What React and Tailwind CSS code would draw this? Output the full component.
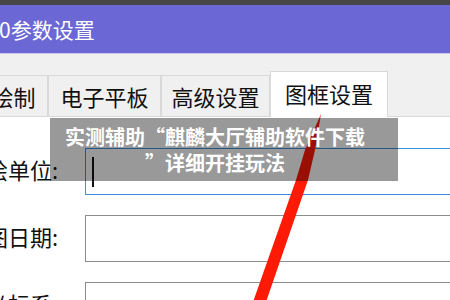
import React from 'react'

const TABS = [
    { label: '绘制', width: 'w-[69px]' },
    { label: '电子平板', width: 'w-[113px]' },
    { label: '高级设置', width: 'w-[109px]' },
]

const FIELDS = [
    { label: '测绘单位:', focused: true },
    { label: '测图日期:', focused: false },
    { label: '坐标系:', focused: false },
]

function FieldRow({ label, focused }) {
    return (
        <div className="flex items-center h-[47px]">
            <div className="w-[58px] shrink-0 flex justify-end whitespace-nowrap text-[22px] leading-none text-[#111] -mt-[5px]">
                {label}
            </div>
            <div
                className={`ml-[27px] w-[400px] shrink-0 h-[47px] bg-white border ${focused ? 'border-[#3d8fdd]' : 'border-[#8c8c8c] border-[1.5px]'
                    } flex items-center`}
            >
                {focused && <div className="ml-[6px] w-[2px] h-[30px] bg-[#111]" />}
            </div>
        </div>
    )
}

export default function App() {
    return (
        <div className="relative w-[450px] h-[300px] overflow-hidden bg-[#f0f0f0] font-['Noto_Sans_CJK_SC','Microsoft_YaHei',sans-serif]">
            <div className="h-[5px] bg-[#464646]" />
            <div className="h-[48px] bg-[#6b68d6] flex items-center text-white text-[21px] leading-none -ml-[1px]">
                0参数设置
            </div>
            <div className="h-px bg-[#c9c8f0]" />

            <div className="flex items-end h-[63px] border-b border-[#d9d9d9] -ml-[21px]">
                {TABS.map((tab) => (
                    <div
                        key={tab.label}
                        className={`${tab.width} shrink-0 h-[41px] border border-b-0 border-[#d9d9d9] bg-[#f0f0f0] flex items-center justify-center text-[22px] leading-none text-[#111] whitespace-nowrap`}
                    >
                        {tab.label}
                    </div>
                ))}
                <div className="w-[118px] shrink-0 h-[46px] -mb-px relative bg-white border border-b-0 border-[#d9d9d9] flex items-center justify-center text-[22px] leading-none text-[#111] whitespace-nowrap pb-[4px]">
                    图框设置
                </div>
            </div>

            <div className="bg-white h-[200px] pt-[31px] flex flex-col gap-[20px]">
                {FIELDS.map((field) => (
                    <FieldRow key={field.label} {...field} />
                ))}
            </div>

            <svg className="absolute inset-0 pointer-events-none" width="450" height="300" viewBox="0 0 450 300">
                <polygon
                    points="253,302 266,302 308,180 315,150 321,114 305,150 296,180"
                    fill="#ff1a06"
                />
            </svg>

            <div className="absolute left-[50px] top-[118px] w-[348px] h-[63px] bg-black/40 pl-[10px] pr-[28px] flex flex-col justify-center text-center text-white font-bold text-[20px] leading-[26px] whitespace-nowrap">
                <span>实测辅助“麒麟大厅辅助软件下载</span>
                <span>”详细开挂玩法</span>
            </div>
        </div>
    )
}
